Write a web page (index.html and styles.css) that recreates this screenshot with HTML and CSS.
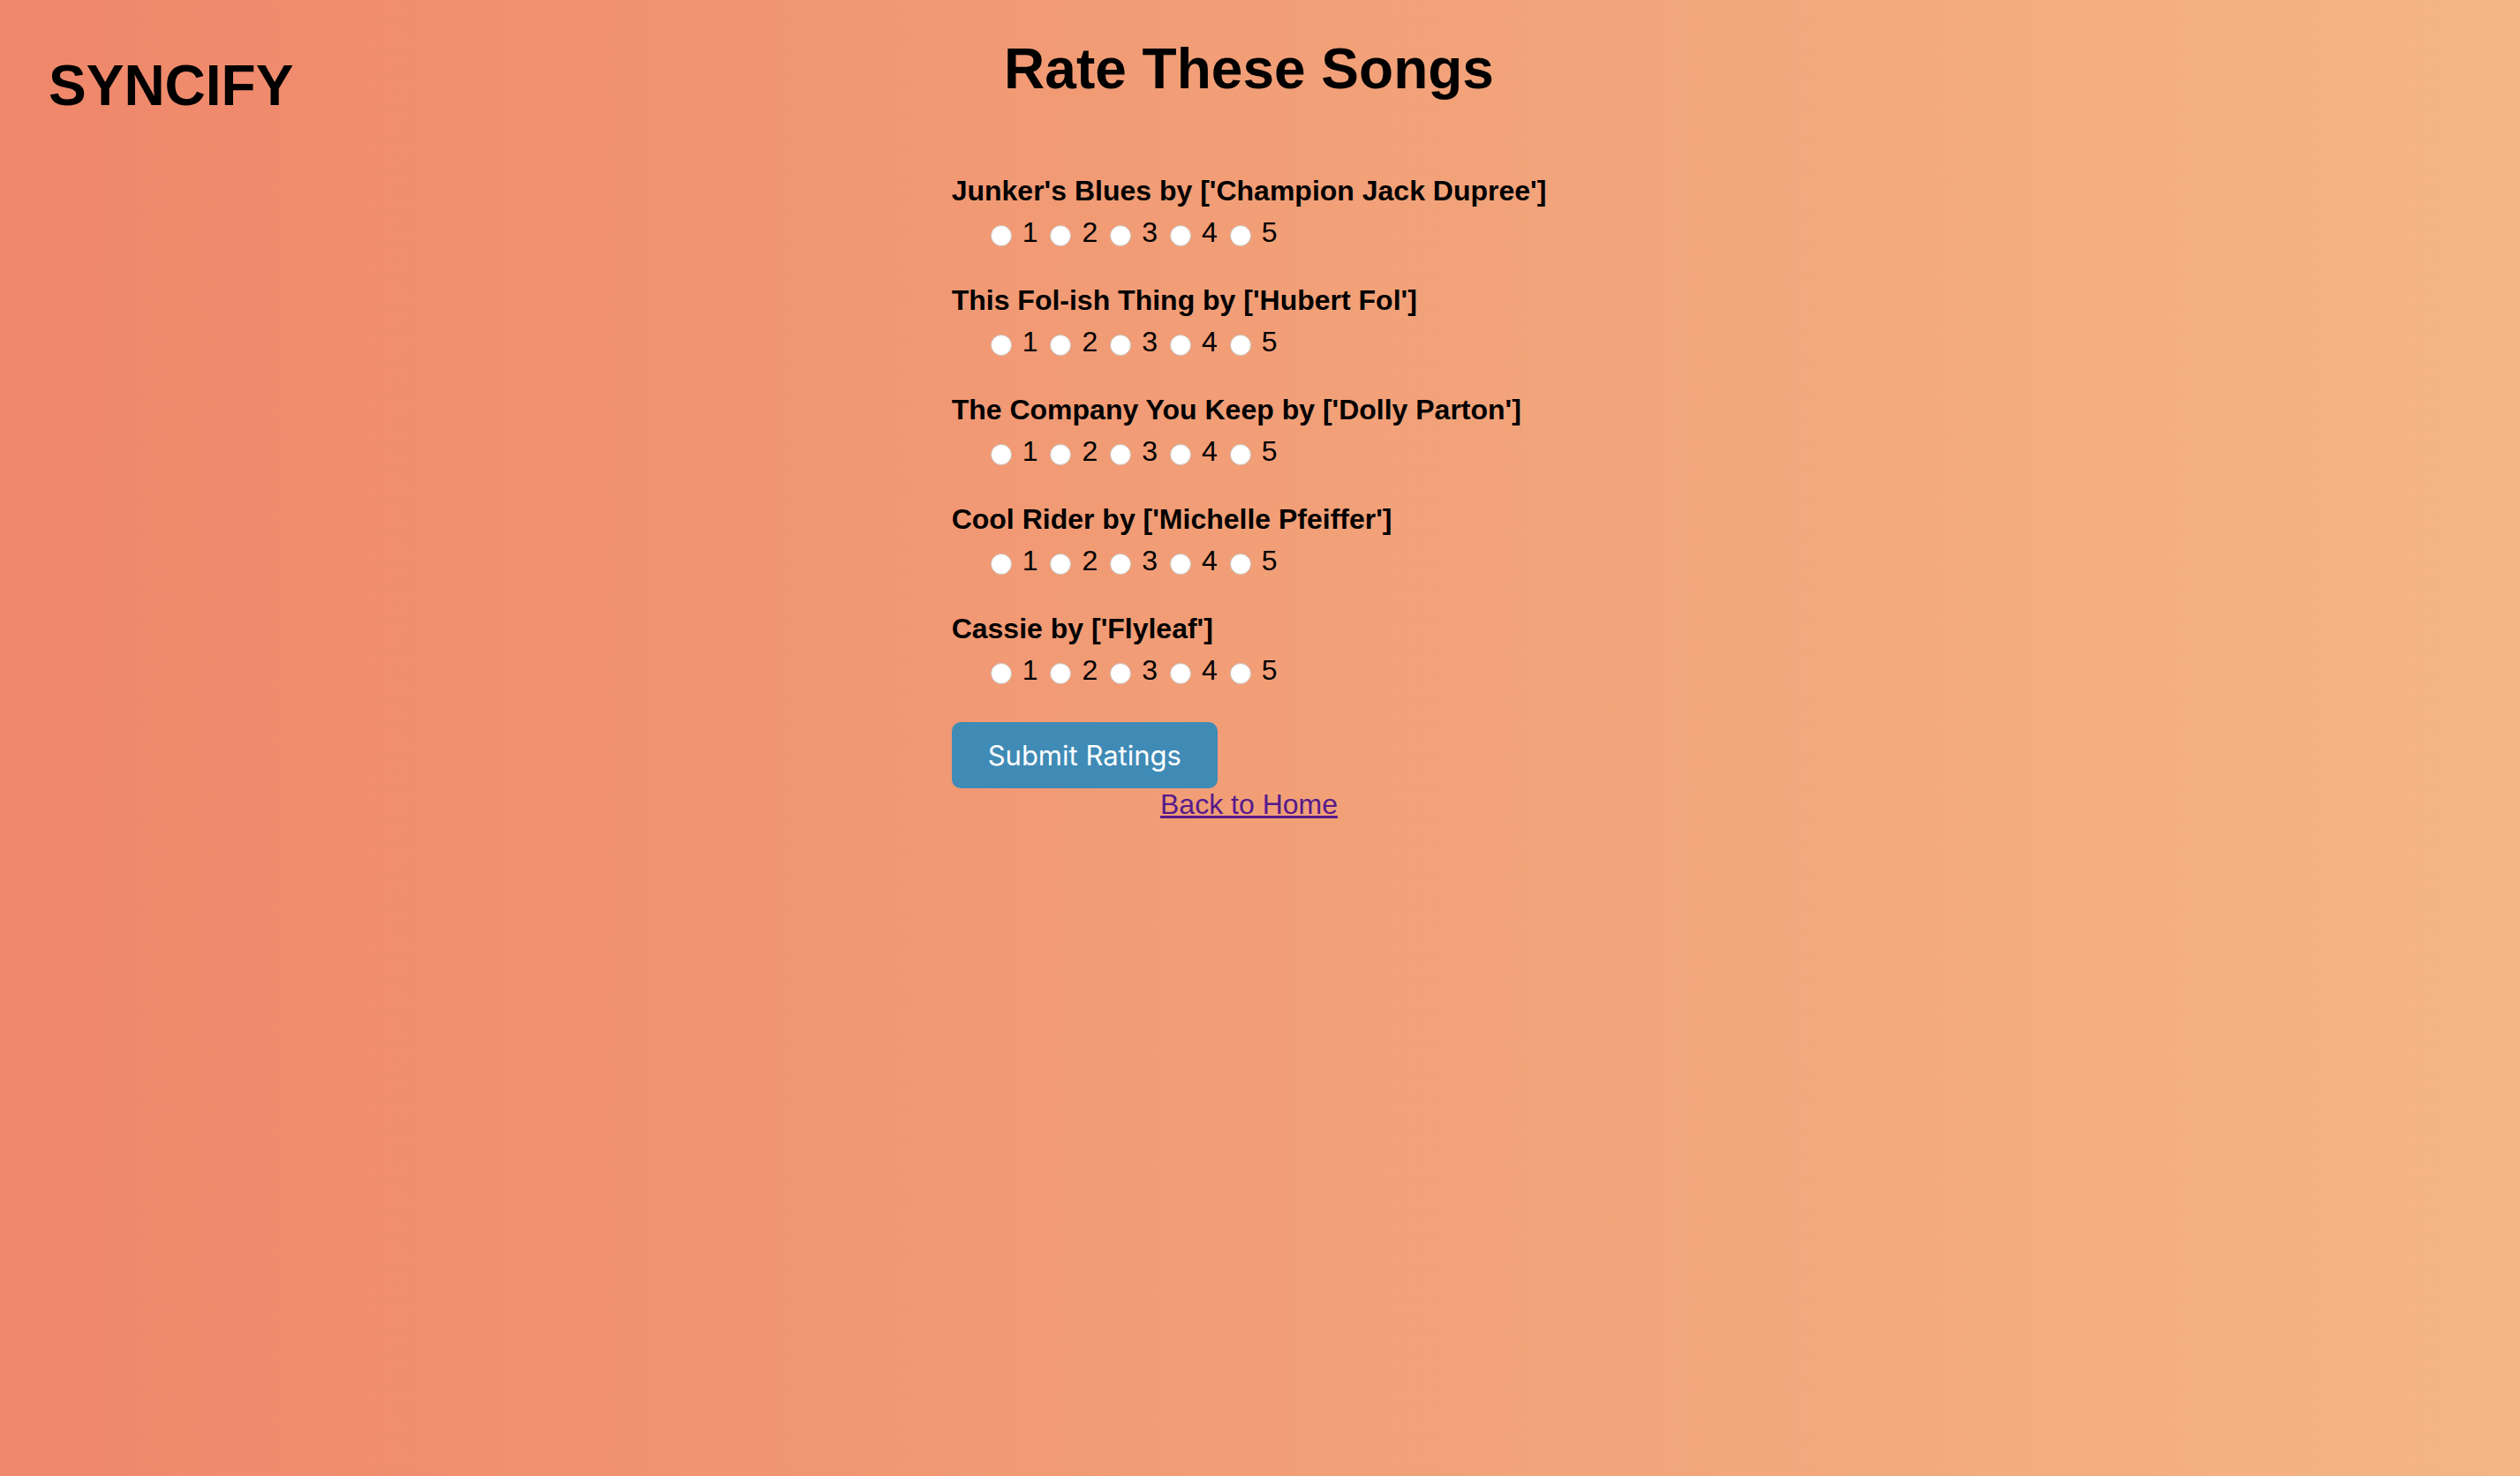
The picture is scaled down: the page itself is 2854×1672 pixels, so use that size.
FILE: index.html
```html
<!DOCTYPE html>
<html lang="en">
<head>
<meta charset="utf-8">
<title>Syncify - Rate These Songs</title>
<link rel="stylesheet" href="styles.css">
</head>
<body>
<div class="page">
  <header class="topbar">
    <div class="logo">SYNCIFY</div>
    <h1 class="title">Rate These Songs</h1>
  </header>

  <form class="rating-form">
    <div class="song">
      <div class="song-label">Junker's Blues by ['Champion Jack Dupree']</div>
      <div class="options">
        <label class="option"><input type="radio" name="s1" value="1">1</label>
        <label class="option"><input type="radio" name="s1" value="2">2</label>
        <label class="option"><input type="radio" name="s1" value="3">3</label>
        <label class="option"><input type="radio" name="s1" value="4">4</label>
        <label class="option"><input type="radio" name="s1" value="5">5</label>
      </div>
    </div>
    <div class="song">
      <div class="song-label">This Fol-ish Thing by ['Hubert Fol']</div>
      <div class="options">
        <label class="option"><input type="radio" name="s2" value="1">1</label>
        <label class="option"><input type="radio" name="s2" value="2">2</label>
        <label class="option"><input type="radio" name="s2" value="3">3</label>
        <label class="option"><input type="radio" name="s2" value="4">4</label>
        <label class="option"><input type="radio" name="s2" value="5">5</label>
      </div>
    </div>
    <div class="song">
      <div class="song-label">The Company You Keep by ['Dolly Parton']</div>
      <div class="options">
        <label class="option"><input type="radio" name="s3" value="1">1</label>
        <label class="option"><input type="radio" name="s3" value="2">2</label>
        <label class="option"><input type="radio" name="s3" value="3">3</label>
        <label class="option"><input type="radio" name="s3" value="4">4</label>
        <label class="option"><input type="radio" name="s3" value="5">5</label>
      </div>
    </div>
    <div class="song">
      <div class="song-label">Cool Rider by ['Michelle Pfeiffer']</div>
      <div class="options">
        <label class="option"><input type="radio" name="s4" value="1">1</label>
        <label class="option"><input type="radio" name="s4" value="2">2</label>
        <label class="option"><input type="radio" name="s4" value="3">3</label>
        <label class="option"><input type="radio" name="s4" value="4">4</label>
        <label class="option"><input type="radio" name="s4" value="5">5</label>
      </div>
    </div>
    <div class="song">
      <div class="song-label">Cassie by ['Flyleaf']</div>
      <div class="options">
        <label class="option"><input type="radio" name="s5" value="1">1</label>
        <label class="option"><input type="radio" name="s5" value="2">2</label>
        <label class="option"><input type="radio" name="s5" value="3">3</label>
        <label class="option"><input type="radio" name="s5" value="4">4</label>
        <label class="option"><input type="radio" name="s5" value="5">5</label>
      </div>
    </div>
    <button type="button" class="submit-btn">Submit Ratings</button>
  </form>

  <div class="back">
    <a class="back-link" href="#">Back to Home</a>
  </div>
</div>
</body>
</html>
```

FILE: styles.css
```css
html, body {
  margin: 0;
  padding: 0;
}

body {
  min-height: 1672px;
  background: linear-gradient(to right, #ef876a, #f4b684);
  font-family: "Liberation Sans", Arial, Helvetica, sans-serif;
  color: #000;
}

.page {
  padding-right: 25px;
}

.topbar {
  display: grid;
  grid-template-columns: 1fr auto 1fr;
  align-items: start;
  padding-top: 41px;
}

.logo {
  grid-column: 1;
  justify-self: start;
  margin-top: 19px;
  padding-left: 55px;
  font-size: 64px;
  line-height: 74px;
  font-weight: bold;
}

.title {
  grid-column: 2;
  margin: 0;
  font-size: 64px;
  line-height: 74px;
  font-weight: bold;
  text-align: center;
}

.rating-form {
  width: fit-content;
  margin: 64px auto 0;
}

.song {
  margin-bottom: 41px;
}

.song-label {
  font-size: 32px;
  line-height: 36px;
  font-weight: bold;
  white-space: nowrap;
}

.options {
  display: flex;
  align-items: center;
  margin-top: 11px;
  padding-left: 44px;
  height: 36px;
  font-size: 32px;
  line-height: 36px;
}

.option {
  display: flex;
  align-items: center;
  margin-right: 14px;
}

.option input {
  appearance: none;
  -webkit-appearance: none;
  box-sizing: border-box;
  width: 24px;
  height: 24px;
  margin: 8px 12px 0 0;
  border-radius: 50%;
  border: 1px solid #c9c4c0;
  background: #ffffff;
}

.submit-btn {
  display: block;
  margin-top: 3px;
  height: 75px;
  padding: 0 41px;
  border: none;
  border-radius: 10px;
  background: #3f8bb6;
  color: #ffffff;
  font-family: Inter, "Noto Sans", sans-serif;
  font-size: 31px;
  line-height: 75px;
}

.back {
  text-align: center;
  font-size: 32px;
  line-height: 36px;
}

.back-link {
  color: #551a8b;
  text-decoration: underline;
}
```
